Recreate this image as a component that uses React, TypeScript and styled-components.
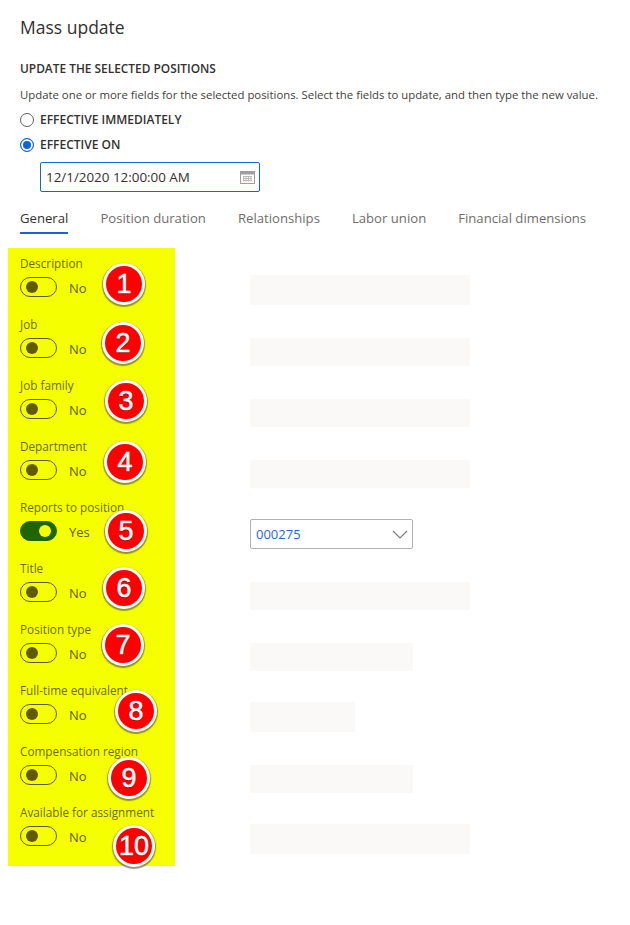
import React from 'react';
import styled, { createGlobalStyle } from 'styled-components';

const GlobalStyle = createGlobalStyle`
  html, body {
    margin: 0;
    padding: 0;
    background: #ffffff;
    font-family: "Open Sans", "Noto Sans", sans-serif;
    color: #323130;
  }
`;

const rows = [
  { label: 'Description', top: 3, height: 30, width: 220, badge: [83, 7] },
  { label: 'Job', top: 5, height: 28, width: 220, badge: [82, 5] },
  { label: 'Job family', top: 5, height: 28, width: 220, badge: [85, 2] },
  { label: 'Department', top: 5, height: 28, width: 220, badge: [84, 2] },
  { label: 'Reports to position', top: 3, on: true, select: true, badge: [85, 10] },
  { label: 'Title', top: 5, height: 28, width: 220, badge: [83, 6] },
  { label: 'Position type', top: 5, height: 28, width: 163, badge: [82, 2] },
  { label: 'Full-time equivalent', top: 3, height: 30, width: 105, badge: [95, 7] },
  { label: 'Compensation region', top: 5, height: 28, width: 163, badge: [88, 13] },
  { label: 'Available for assignment', top: 3, height: 30, width: 220, badge: [93, 20] },
];

const tabs = ['General', 'Position duration', 'Relationships', 'Labor union', 'Financial dimensions'];

const App = () => {
  return (
    <React.Fragment>
      <GlobalStyle />
      <Page>
        <Title>Mass update</Title>
        <SectionHeader>UPDATE THE SELECTED POSITIONS</SectionHeader>
        <Intro>
          Update one or more fields for the selected positions. Select the fields to update, and then type the new value.
        </Intro>
        <RadioRow>
          <Radio />
          <RadioLabel>EFFECTIVE IMMEDIATELY</RadioLabel>
        </RadioRow>
        <RadioRow $gap>
          <Radio $checked />
          <RadioLabel>EFFECTIVE ON</RadioLabel>
        </RadioRow>
        <DateInput>
          <span>12/1/2020 12:00:00 AM</span>
          <CalendarIcon />
        </DateInput>
        <TabBar>
          {tabs.map((tab, i) => (
            <Tab key={tab} $active={i === 0}>{tab}</Tab>
          ))}
        </TabBar>
      </Page>
      <Form>
        <Highlight>
          {rows.map((row, i) => (
            <ToggleRow key={row.label}>
              <FieldLabel>{row.label}</FieldLabel>
              <ToggleLine>
                <Toggle $on={row.on}>
                  <Knob $on={row.on} />
                </Toggle>
                <ToggleText>{row.on ? 'Yes' : 'No'}</ToggleText>
              </ToggleLine>
              <Badge $x={row.badge[0]} $y={row.badge[1]}>{i + 1}</Badge>
            </ToggleRow>
          ))}
        </Highlight>
        <Values>
          {rows.map((row) => (
            <ValueSlot key={row.label} $top={row.top}>
              {row.select ? (
                <Select>
                  <span>000275</span>
                  <svg width="16" height="9" viewBox="0 0 16 9" fill="none">
                    <path d="M1 1l7 7 7-7" stroke="#7a7876" strokeWidth="1.1" />
                  </svg>
                </Select>
              ) : (
                <EmptyField $width={row.width} $height={row.height} />
              )}
            </ValueSlot>
          ))}
        </Values>
      </Form>
    </React.Fragment>
  );
};

const CalendarIcon = () => (
  <svg width="15" height="14" viewBox="0 0 15 14" fill="none">
    <rect x="0.5" y="1.5" width="14" height="12" fill="#fff" stroke="#a19f9d" />
    <rect x="1" y="2" width="13" height="2.5" fill="#a19f9d" />
    <path
      d="M3 6.5h9M3 8.5h9M3 10.5h9M3.5 6v5.5M6 6v5.5M8.5 6v5.5M11 6v5.5"
      stroke="#bdbbb9"
      strokeWidth="1"
    />
  </svg>
);

const Page = styled.div`
  padding: 15px 20px 0;
`;

const Title = styled.h1`
  margin: 0;
  font-size: 17.5px;
  line-height: 24px;
  font-weight: 500;
  color: #323130;
`;

const SectionHeader = styled.div`
  margin-top: 21px;
  font-size: 11.9px;
  line-height: 16px;
  font-weight: 600;
  color: #323130;
`;

const Intro = styled.div`
  margin-top: 11px;
  font-size: 11.37px;
  line-height: 16px;
  color: #3f3e3d;
  white-space: nowrap;
`;

const RadioRow = styled.div`
  display: flex;
  align-items: center;
  gap: 6px;
  margin-top: 9px;
  height: 16px;
`;

const Radio = styled.span`
  box-sizing: border-box;
  width: 14px;
  height: 14px;
  border-radius: 50%;
  background: ${(props) => (props.$checked ? '#0f62e6' : '#ffffff')};
  border: 1px solid ${(props) => (props.$checked ? '#0f62e6' : '#605e5c')};
  box-shadow: ${(props) => (props.$checked ? 'inset 0 0 0 2px #ffffff' : 'none')};
`;

const RadioLabel = styled.span`
  font-size: 12px;
  line-height: 16px;
  font-weight: 600;
  color: #323130;
`;

const DateInput = styled.div`
  box-sizing: border-box;
  display: flex;
  align-items: center;
  justify-content: space-between;
  width: 220px;
  height: 30px;
  margin: 9px 0 0 20px;
  padding: 0 4px 0 5px;
  border: 1px solid #1a62d6;
  border-radius: 2px;
  font-size: 13.4px;
  color: #323130;
`;

const TabBar = styled.div`
  display: flex;
  gap: 32px;
  margin-top: 9px;
`;

const Tab = styled.div`
  padding: 8px 0 5px;
  font-size: 13.15px;
  line-height: 18px;
  white-space: nowrap;
  color: ${(props) => (props.$active ? '#323130' : '#6f6d6b')};
  border-bottom: 2px solid ${(props) => (props.$active ? '#1a62d6' : 'transparent')};
`;

const Form = styled.div`
  display: flex;
  margin-top: 14px;
`;

const Highlight = styled.div`
  box-sizing: border-box;
  width: 167px;
  height: 618px;
  margin-left: 8px;
  padding: 7px 12px 0;
  background: #f6ff00;
`;

const ToggleRow = styled.div`
  position: relative;
  height: 61px;
`;

const FieldLabel = styled.div`
  font-size: 11.75px;
  line-height: 16px;
  white-space: nowrap;
  color: #6b6b00;
`;

const ToggleLine = styled.div`
  display: flex;
  align-items: center;
  gap: 12px;
  margin-top: 6px;
`;

const Toggle = styled.div`
  box-sizing: border-box;
  display: flex;
  align-items: center;
  justify-content: ${(props) => (props.$on ? 'flex-end' : 'flex-start')};
  width: 37px;
  height: 20px;
  padding: 0 5px;
  border-radius: 10px;
  border: 1px solid ${(props) => (props.$on ? '#1f6600' : '#5e5a00')};
  background: ${(props) => (props.$on ? '#1f6600' : 'transparent')};
`;

const Knob = styled.span`
  width: 12px;
  height: 12px;
  border-radius: 50%;
  background: ${(props) => (props.$on ? '#f6ff00' : '#625a00')};
`;

const ToggleText = styled.span`
  padding-top: 2px;
  font-size: 13px;
  line-height: 18px;
  color: #5c5c00;
`;

const Badge = styled.div`
  position: absolute;
  left: ${(props) => props.$x}px;
  top: ${(props) => props.$y + 1}px;
  box-sizing: border-box;
  display: flex;
  align-items: center;
  justify-content: center;
  width: 42px;
  height: 42px;
  border-radius: 50%;
  border: 3px solid #ffffff;
  background: #fe0000;
  box-shadow: 0 1px 1px 1px rgba(80, 80, 40, 0.6);
  font-family: "Liberation Sans", Arial, sans-serif;
  font-size: 27px;
  font-weight: 400;
  color: #ffffff;
  text-shadow: 0 1px 1px rgba(90, 0, 0, 0.7);
  -webkit-text-stroke: 0.5px #ffffff;
`;

const Values = styled.div`
  margin-left: 75px;
  padding-top: 24px;
`;

const ValueSlot = styled.div`
  box-sizing: border-box;
  height: 61px;
  padding-top: ${(props) => props.$top}px;
`;

const EmptyField = styled.div`
  width: ${(props) => props.$width}px;
  height: ${(props) => props.$height}px;
  background: #faf9f8;
`;

const Select = styled.div`
  box-sizing: border-box;
  display: flex;
  align-items: center;
  justify-content: space-between;
  width: 163px;
  height: 30px;
  padding: 0 4px 0 5px;
  border: 1px solid #b3b0ad;
  border-radius: 2px;
  font-size: 13px;
  color: #2568df;
`;

export default App;
